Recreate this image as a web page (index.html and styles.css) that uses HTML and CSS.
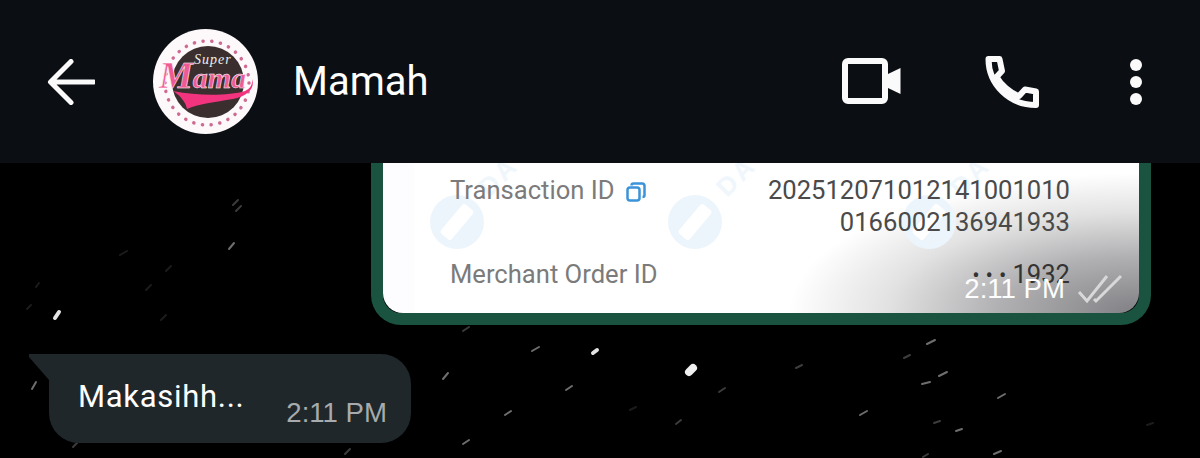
FILE: index.html
```html
<!DOCTYPE html>
<html lang="id">
<head>
  <meta charset="UTF-8">
  <meta name="viewport" content="width=device-width, initial-scale=1.0">
  <title>Mamah</title>
  <link rel="stylesheet" href="styles.css">
</head>
<body>
  <header class="topbar">
    <svg class="back-icon" viewBox="0 0 48 46" aria-hidden="true">
      <path d="M47 23H4M24 2.500L3.500 23L24 43.500"/>
    </svg>
    <svg class="avatar" viewBox="0 0 105 105" role="img" aria-label="Super Mama">
      <circle class="avatar-bg" cx="52.500" cy="52.500" r="52.500"/>
      <circle class="avatar-dark" cx="55" cy="53" r="36"/>
      <circle class="avatar-dots" cx="54" cy="54" r="42"/>
      <path class="avatar-swoosh" d="M20 62C45 67 75 67 92 62C97 60 100 55 99 50C103 60 92 68 80 70C62 73 45 75 34 80C33 74 28 67 20 62Z"/>
      <text class="avatar-super" x="41" y="35">Super</text>
      <text class="avatar-mama" x="6" y="59"><tspan class="avatar-cap">M</tspan>ama</text>
    </svg>
    <h1 class="contact-name">Mamah</h1>
    <div class="actions">
      <svg class="video-icon" viewBox="0 0 60 48" aria-hidden="true">
        <rect class="outline" x="3" y="3" width="40" height="40" rx="3"/>
        <path class="solid" d="M46 16L58.500 10V36L46 30Z"/>
      </svg>
      <svg class="phone-icon" viewBox="0 0 56 56" aria-hidden="true">
        <path class="outline" d="M4.500 5H15.500L18 17L12.500 23C17 31 26 39 35 42L41 35.500L52 37.500V51C25 51 4.500 30 4.500 5Z"/>
      </svg>
      <div class="more-icon"><span></span><span></span><span></span></div>
    </div>
  </header>

  <main class="chat">
    <svg class="wallpaper" viewBox="0 0 1200 295" aria-hidden="true">
      <g class="speck-bright">
        <path d="M55 155L59 149"/>
        <path d="M593 190L597 187"/>
      </g>
      <path class="speck-big" d="M689 209L693 205"/>
      <g class="speck-mid">
        <path d="M32 226L36 219"/>
        <path d="M229 86L234 80"/>
        <path d="M443 216L448 210"/>
        <path d="M532 188L539 184"/>
        <path d="M566 227L572 223"/>
        <path d="M505 252L511 248"/>
        <path d="M463 281L469 277"/>
        <path d="M927 181L935 177"/>
        <path d="M939 213L947 209"/>
        <path d="M922 221L930 219"/>
        <path d="M998 235L1005 231"/>
        <path d="M860 252L867 248"/>
        <path d="M956 268L962 266"/>
        <path d="M994 291L1001 288"/>
      </g>
      <g class="speck-dim">
        <path d="M233 42L238 37"/>
        <path d="M236 48L241 43"/>
        <path d="M73 284L77 280"/>
        <path d="M345 291L350 286"/>
        <path d="M676 261L681 257"/>
        <path d="M719 229L725 225"/>
        <path d="M796 205L802 202"/>
        <path d="M463 168L469 164"/>
        <path d="M904 195L910 192"/>
        <path d="M934 260L940 258"/>
        <path d="M923 294L928 291"/>
      </g>
      <g class="speck-faint">
        <path d="M36 124L39 120"/>
        <path d="M27 146L31 142"/>
        <path d="M146 127L151 122"/>
        <path d="M166 108L171 103"/>
        <path d="M120 92L127 88"/>
        <path d="M161 157L166 152"/>
        <path d="M630 247L636 244"/>
        <path d="M1147 262L1153 260"/>
      </g>
    </svg>

    <div class="bubble-out">
      <div class="receipt">
        <svg class="watermark" viewBox="0 0 756 150" aria-hidden="true">
          <g class="mark" transform="translate(74 59)">
            <circle r="27"/>
            <rect x="-7" y="-19" width="14" height="38" rx="3" transform="rotate(40)"/>
          </g>
          <g class="mark" transform="translate(312 59)">
            <circle r="27"/>
            <rect x="-7" y="-19" width="14" height="38" rx="3" transform="rotate(40)"/>
          </g>
          <g class="mark" transform="translate(546 59)">
            <circle r="27"/>
            <rect x="-7" y="-19" width="14" height="38" rx="3" transform="rotate(40)"/>
          </g>
          <text class="mark-text" transform="translate(106 35) rotate(-45)">DA</text>
          <text class="mark-text" transform="translate(344 35) rotate(-45)">DA</text>
          <text class="mark-text" transform="translate(578 35) rotate(-45)">DA</text>
        </svg>
        <div class="receipt-row row-transaction">
          <span class="receipt-label">Transaction ID
            <svg class="copy-icon" viewBox="0 0 20 20" aria-hidden="true">
              <rect x="1.500" y="5.500" width="12" height="13" rx="2.500"/>
              <path d="M5.500 3.500C5.500 2.200 6.300 1.500 7.500 1.500H16C17.500 1.500 18.500 2.500 18.500 4V13C18.500 14.300 17.500 15 16.500 15"/>
            </svg>
          </span>
          <span class="receipt-value">202512071012141001010<br>0166002136941933</span>
        </div>
        <div class="receipt-row">
          <span class="receipt-label">Merchant Order ID</span>
          <span class="receipt-value masked"><span class="mask-dots">&bull;&bull;&bull;</span>1932</span>
        </div>
        <div class="image-meta">
          <span class="time-light">2:11 PM</span>
          <svg class="ticks" viewBox="0 0 46 30" aria-hidden="true">
            <path d="M2 18L10 27L30 2M17 25L19 27L44 2"/>
          </svg>
        </div>
      </div>
    </div>

    <div class="bubble-in">
      <span class="message-text">Makasihh...</span>
      <span class="time-muted">2:11 PM</span>
    </div>
  </main>
</body>
</html>
```

FILE: styles.css
```css
:root {
  --bar: #0b0f14;
  --bubble-in: #1f272b;
  --bubble-green: #1a5340;
  --icon: #fbfafb;
}

* {
  box-sizing: border-box;
  margin: 0;
  padding: 0;
}

body {
  background: #000;
  color: #fff;
  font-family: Roboto, sans-serif;
  height: 458px;
  overflow: hidden;
}

/* top bar */
.topbar {
  display: flex;
  align-items: center;
  height: 163px;
  padding: 0 58px 0 47px;
  background: var(--bar);
  position: relative;
  z-index: 1;
}

.back-icon {
  width: 48px;
  height: 46px;
  margin-right: 58px;
  fill: none;
  stroke: var(--icon);
  stroke-width: 5;
  stroke-linecap: round;
  stroke-linejoin: round;
}

.avatar {
  width: 105px;
  height: 105px;
  margin-right: 35px;
}

.avatar-bg { fill: #fdf8f9; }
.avatar-dark { fill: #3a2e2e; }

.avatar-dots {
  fill: none;
  stroke: #cf6a92;
  stroke-width: 3.500;
  stroke-linecap: round;
  stroke-dasharray: 0.1 8.700;
}

.avatar-swoosh { fill: #f2347f; }

.avatar-super {
  fill: #eee;
  font-family: "Liberation Serif", serif;
  font-style: italic;
  font-size: 14px;
  letter-spacing: 1px;
}

.avatar-mama {
  fill: #ee5a95;
  stroke: #fff;
  stroke-width: 0.5px;
  font-family: "Liberation Serif", serif;
  font-style: italic;
  font-weight: 700;
  font-size: 30px;
}

.avatar-cap { font-size: 38px; }

.contact-name {
  font-size: 40px;
  font-weight: 400;
}

.actions {
  display: flex;
  align-items: center;
  margin-left: auto;
}

.outline {
  fill: none;
  stroke: var(--icon);
  stroke-width: 6;
  stroke-linejoin: round;
}

.solid { fill: var(--icon); }

.video-icon {
  width: 60px;
  height: 48px;
  margin-right: 82px;
}

.phone-icon {
  width: 56px;
  height: 56px;
  margin-right: 90px;
}

.more-icon {
  display: flex;
  flex-direction: column;
  gap: 5px;
}

.more-icon span {
  width: 12px;
  height: 12px;
  border-radius: 50%;
  background: var(--icon);
}

/* chat */
.chat {
  display: flex;
  flex-direction: column;
  height: 295px;
  position: relative;
}

.wallpaper {
  position: absolute;
  inset: 0;
  width: 1200px;
  height: 295px;
  fill: none;
  stroke-linecap: round;
}

.speck-bright {
  stroke: #e4e4e4;
  stroke-width: 4;
}

.speck-big {
  stroke: #f0f0f0;
  stroke-width: 8;
}

.speck-mid {
  stroke: #6e6e6e;
  stroke-width: 2;
}

.speck-dim {
  stroke: #3c3c3c;
  stroke-width: 2;
}

.speck-faint {
  stroke: #1c1c1c;
  stroke-width: 2;
}

.bubble-out {
  align-self: flex-end;
  position: relative;
  width: 780px;
  height: 162px;
  margin-right: 49px;
  border: 12px solid var(--bubble-green);
  border-top: 0;
  border-radius: 0 0 30px 30px;
}

.receipt {
  position: relative;
  height: 100%;
  padding: 11px 69px 0 67px;
  border-radius: 0 0 20px 20px;
  overflow: hidden;
  background:
    radial-gradient(ellipse 350px 140px at 100% 100%, #808084, #b0b0b2 40%, #e2e2e3 72%, rgba(255, 255, 255, 0)),
    linear-gradient(90deg, #fdfcfe 31px, #fff 32px);
}

.watermark {
  position: absolute;
  top: 0;
  left: 0;
  width: 756px;
  height: 150px;
}

.mark circle { fill: #ecf5fc; }
.mark rect { fill: #fff; }

.mark-text {
  fill: #eff6fc;
  font-family: "Liberation Sans", sans-serif;
  font-weight: 700;
  font-size: 26px;
  letter-spacing: 3px;
}

.receipt-row {
  display: flex;
  justify-content: space-between;
  position: relative;
}

.row-transaction { height: 84px; }

.receipt-label {
  color: #7b7b7b;
  font-size: 25.600px;
  line-height: 32px;
}

.receipt-value {
  color: #4a4a4a;
  font-size: 25.600px;
  line-height: 32px;
  text-align: right;
}

.masked { color: #333; }

.mask-dots {
  font-size: 22px;
  letter-spacing: 6px;
}

.copy-icon {
  width: 20px;
  height: 20px;
  margin-left: 5px;
  vertical-align: -3px;
  fill: none;
  stroke: #3b93d9;
  stroke-width: 2.500;
}

.image-meta {
  position: absolute;
  right: 16px;
  bottom: 8px;
  display: flex;
  align-items: center;
  gap: 12px;
}

.time-light {
  color: #fdfdfd;
  font-size: 27.600px;
  font-family: "Liberation Sans", sans-serif;
}

.ticks {
  width: 46px;
  height: 30px;
  fill: none;
  stroke: #d8d8da;
  stroke-width: 3;
}

.bubble-in {
  position: relative;
  display: flex;
  align-self: flex-start;
  width: 362px;
  height: 89px;
  margin: 29px 0 0 49px;
  padding: 0 24px 0 29px;
  background: var(--bubble-in);
  border-radius: 0 30px 30px 30px;
}

/* tail */
.bubble-in::before {
  content: "";
  position: absolute;
  top: 0;
  left: -20px;
  width: 20px;
  height: 26px;
  background: var(--bubble-in);
  clip-path: polygon(0 0, 100% 0, 100% 100%, 0 12%);
}

.message-text {
  font-size: 31px;
  line-height: 32px;
  margin-top: 27px;
  letter-spacing: 0.7px;
}

.time-muted {
  margin: 43px 0 0 auto;
  color: #a7abad;
  font-size: 27.600px;
  line-height: 32px;
  font-family: "Liberation Sans", sans-serif;
}
```
